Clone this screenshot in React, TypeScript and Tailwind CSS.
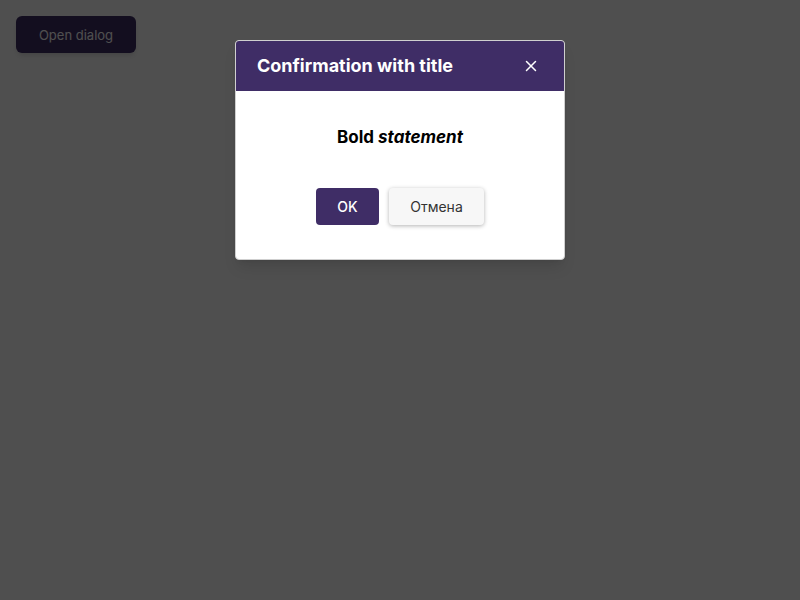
import { X } from "lucide-react";

export default function App() {
  return (
    <div className="relative h-[600px] w-[800px] bg-white font-[family-name:Inter,sans-serif]">
      {/* Page content behind the overlay */}
      <div className="p-4">
        <button className="h-[37px] w-[120px] rounded-md bg-[#3f2d66] pt-[2px] text-[13px] text-white shadow-md">
          Open dialog
        </button>
      </div>

      {/* Backdrop */}
      <div className="absolute inset-0 bg-[rgba(0,0,0,0.69)]" />

      {/* Dialog */}
      <div className="absolute left-[235px] top-[40px] w-[330px] overflow-hidden rounded border border-[#cfcfcf] bg-white shadow-lg">
        <div className="flex h-[50px] items-center justify-between bg-[#3f2d66] pl-[21px] pr-[24px]">
          <h2 className="text-lg font-bold text-white">Confirmation with title</h2>
          <X className="h-[18px] w-[18px] text-white" strokeWidth={2} />
        </div>
        <div className="flex flex-col items-center pt-[34px] pb-[34px]">
          <p className="text-[17px] leading-6 font-bold text-black">
            Bold <em>statement</em>
          </p>
          <div className="mt-[39px] flex gap-[10px]">
            <button className="h-[37px] w-[63px] rounded bg-[#3f2d66] text-sm font-medium text-white">
              OK
            </button>
            <button className="h-[37px] w-[95px] rounded bg-[#f7f7f7] text-sm text-[#333] shadow-[0_1px_4px_rgba(0,0,0,0.3)]">
              Отмена
            </button>
          </div>
        </div>
      </div>
    </div>
  );
}
